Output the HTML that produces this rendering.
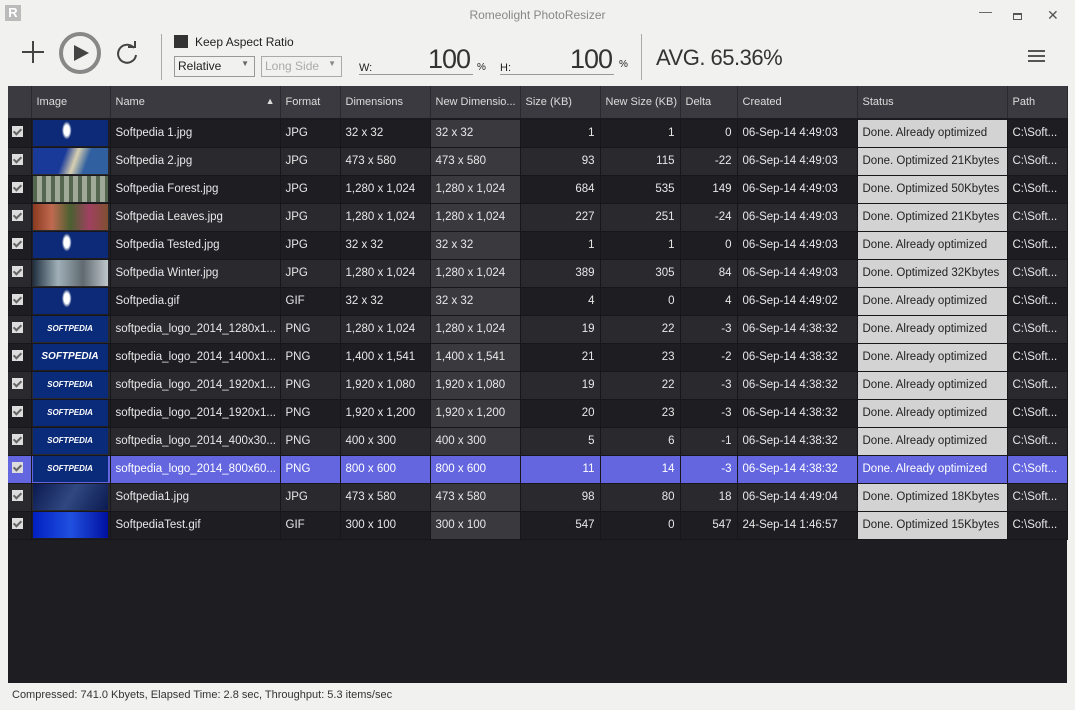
<!DOCTYPE html>
<html><head><meta charset="utf-8"><style>
*{margin:0;padding:0;box-sizing:border-box}
body{width:1075px;height:710px;background:#f1f1ef;font-family:"Liberation Sans",sans-serif;position:relative;overflow:hidden;color:#222}
.a{position:absolute}
.title{top:8px;left:0;width:1075px;text-align:center;font-size:12px;color:#888}
table{position:absolute;left:8px;top:86px;width:1059px;border-collapse:collapse;table-layout:fixed;font-size:11.5px;color:#e8e8e8}
th{height:33px;background:#3b3a40;color:#ddd;font-weight:normal;font-size:11px;text-align:left;padding-left:5px;white-space:nowrap;overflow:hidden;border-right:1px solid #2a292e;border-bottom:2px solid #1b1a1e}
td{height:28px;padding:0 5px;border-right:1px solid #17161a;border-bottom:1px solid #17161a;white-space:nowrap;overflow:hidden}
tr.o td{background:#1e1d22}tr.e td{background:#2a292e}
td.nd{background:#3a393e!important}
td.st{background:#d3d3d3!important;color:#222}
td.r{text-align:right}
tr.s td{background:#6466e0!important;color:#fff}
tr.s td.st{background:#6466e0!important;color:#fff}
.cb{width:11px;height:11px;background:#ddd;display:inline-block;margin-left:-1px;position:relative}
.cb:after{content:"";position:absolute;left:3px;top:1px;width:3px;height:6px;border:solid #666;border-width:0 2px 2px 0;transform:rotate(45deg)}
.th{width:75px;height:26px;display:block;margin-left:-4px}
.t1{background:radial-gradient(ellipse 7px 13px at 45% 40%,#fff 40%,transparent 70%),#0c2a78}
.t2{background:linear-gradient(110deg,#1a3a9a 40%,#d8d0b0 55%,#3060a0 70%)}
.t3{background:repeating-linear-gradient(90deg,#556650 0 4px,#a0a898 4px 9px)}
.t4{background:linear-gradient(90deg,#8a3a20,#c06a50,#4a6030,#a04060,#805030)}
.t6{background:linear-gradient(90deg,#203040,#a0b0b8,#606a70,#c0c8cc)}
.tl{background:#0a2a7a;color:#fff;font-weight:bold;font-size:8px;text-align:center;line-height:26px}
.t14{background:linear-gradient(120deg,#0a1a50,#304880,#0a1a50)}
.t15{background:linear-gradient(90deg,#0020c0,#2050e0,#0010a0)}
.body{position:absolute;left:8px;top:86px;width:1059px;height:597px;background:#1e1d22}
</style></head><body>
<div class="a" style="left:5px;top:5px;width:16px;height:16px;background:#bbb;color:#fff;font-weight:bold;font-size:13px;text-align:center;line-height:16px">R</div>
<div class="a title">Romeolight PhotoResizer</div>
<div class="a" style="left:979px;top:4px;font-size:13px;color:#555">—</div>
<div class="a" style="left:1013px;top:13px;width:9px;height:7px;border:1px solid #555;border-top-width:2px"></div>
<div class="a" style="left:1047px;top:7px;font-size:14px;color:#555">✕</div>
<div class="a" style="left:22px;top:51px;width:22px;height:2px;background:#444"></div>
<div class="a" style="left:32px;top:41px;width:2px;height:22px;background:#444"></div>
<svg class="a" style="left:57px;top:30px" width="46" height="46"><circle cx="23" cy="23" r="19" fill="none" stroke="#888" stroke-width="4"/><path d="M17 15 L32 23 L17 31 Z" fill="#444"/></svg>
<svg class="a" style="left:114px;top:40px" width="26" height="26"><path d="M20 8 A9 9 0 1 0 22 15" fill="none" stroke="#444" stroke-width="2"/><path d="M14 7 L21 7 L21 1" fill="none" stroke="#444" stroke-width="2"/></svg>
<div class="a" style="left:161px;top:34px;width:1px;height:46px;background:#aaa"></div>
<div class="a" style="left:174px;top:35px;width:14px;height:13px;background:#333"></div>
<div class="a" style="left:195px;top:35px;font-size:12px;color:#222">Keep Aspect Ratio</div>
<div class="a" style="left:174px;top:56px;width:81px;height:21px;border:1px solid #999;font-size:12px;padding:2px 3px;color:#222">Relative<span style="position:absolute;right:5px;top:2px;font-size:8px;color:#666">▼</span></div>
<div class="a" style="left:261px;top:56px;width:81px;height:21px;border:1px solid #aaa;font-size:12px;padding:2px 3px;color:#aaa">Long Side<span style="position:absolute;right:5px;top:2px;font-size:8px;color:#888">▼</span></div>
<div class="a" style="left:359px;top:60px;width:114px;height:15px;border-bottom:1px solid #999;font-size:11px;padding-top:2px">W:</div>
<div class="a" style="left:428px;top:44px;font-size:27px;color:#333;letter-spacing:-1px">100</div>
<div class="a" style="left:477px;top:62px;font-size:10px">%</div>
<div class="a" style="left:500px;top:60px;width:114px;height:15px;border-bottom:1px solid #999;font-size:11px;padding-top:2px">H:</div>
<div class="a" style="left:570px;top:44px;font-size:27px;color:#333;letter-spacing:-1px">100</div>
<div class="a" style="left:619px;top:59px;font-size:10px">%</div>
<div class="a" style="left:641px;top:34px;width:1px;height:46px;background:#aaa"></div>
<div class="a" style="left:656px;top:45px;font-size:22px;color:#333;letter-spacing:-.5px">AVG. 65.36%</div>
<div class="a" style="left:1028px;top:50px;width:17px;height:1.5px;background:#555;box-shadow:0 5px 0 #555,0 10px 0 #555"></div>
<div class="body"></div>
<table>
<colgroup><col style="width:23px"><col style="width:79px"><col style="width:170px"><col style="width:60px"><col style="width:90px"><col style="width:90px"><col style="width:80px"><col style="width:80px"><col style="width:57px"><col style="width:120px"><col style="width:150px"><col style="width:60px"></colgroup>
<tr><th></th><th>Image</th><th>Name<span style="float:right;margin-right:5px;font-size:9px">▲</span></th><th>Format</th><th>Dimensions</th><th>New Dimensio...</th><th>Size (KB)</th><th>New Size (KB)</th><th>Delta</th><th>Created</th><th>Status</th><th>Path</th></tr>
<tr class="o"><td><i class="cb"></i></td><td><i class="th t1"></i></td><td>Softpedia 1.jpg</td><td>JPG</td><td>32 x 32</td><td class="nd">32 x 32</td><td class="r">1</td><td class="r">1</td><td class="r">0</td><td>06-Sep-14 4:49:03</td><td class="st">Done. Already optimized</td><td>C:\Soft...</td></tr>
<tr class="e"><td><i class="cb"></i></td><td><i class="th t2"></i></td><td>Softpedia 2.jpg</td><td>JPG</td><td>473 x 580</td><td class="nd">473 x 580</td><td class="r">93</td><td class="r">115</td><td class="r">-22</td><td>06-Sep-14 4:49:03</td><td class="st">Done. Optimized 21Kbytes</td><td>C:\Soft...</td></tr>
<tr class="o"><td><i class="cb"></i></td><td><i class="th t3"></i></td><td>Softpedia Forest.jpg</td><td>JPG</td><td>1,280 x 1,024</td><td class="nd">1,280 x 1,024</td><td class="r">684</td><td class="r">535</td><td class="r">149</td><td>06-Sep-14 4:49:03</td><td class="st">Done. Optimized 50Kbytes</td><td>C:\Soft...</td></tr>
<tr class="e"><td><i class="cb"></i></td><td><i class="th t4"></i></td><td>Softpedia Leaves.jpg</td><td>JPG</td><td>1,280 x 1,024</td><td class="nd">1,280 x 1,024</td><td class="r">227</td><td class="r">251</td><td class="r">-24</td><td>06-Sep-14 4:49:03</td><td class="st">Done. Optimized 21Kbytes</td><td>C:\Soft...</td></tr>
<tr class="o"><td><i class="cb"></i></td><td><i class="th t1"></i></td><td>Softpedia Tested.jpg</td><td>JPG</td><td>32 x 32</td><td class="nd">32 x 32</td><td class="r">1</td><td class="r">1</td><td class="r">0</td><td>06-Sep-14 4:49:03</td><td class="st">Done. Already optimized</td><td>C:\Soft...</td></tr>
<tr class="e"><td><i class="cb"></i></td><td><i class="th t6"></i></td><td>Softpedia Winter.jpg</td><td>JPG</td><td>1,280 x 1,024</td><td class="nd">1,280 x 1,024</td><td class="r">389</td><td class="r">305</td><td class="r">84</td><td>06-Sep-14 4:49:03</td><td class="st">Done. Optimized 32Kbytes</td><td>C:\Soft...</td></tr>
<tr class="o"><td><i class="cb"></i></td><td><i class="th t1"></i></td><td>Softpedia.gif</td><td>GIF</td><td>32 x 32</td><td class="nd">32 x 32</td><td class="r">4</td><td class="r">0</td><td class="r">4</td><td>06-Sep-14 4:49:02</td><td class="st">Done. Already optimized</td><td>C:\Soft...</td></tr>
<tr class="e"><td><i class="cb"></i></td><td><i class="th tl">SOFTPEDIA</i></td><td>softpedia_logo_2014_1280x1...</td><td>PNG</td><td>1,280 x 1,024</td><td class="nd">1,280 x 1,024</td><td class="r">19</td><td class="r">22</td><td class="r">-3</td><td>06-Sep-14 4:38:32</td><td class="st">Done. Already optimized</td><td>C:\Soft...</td></tr>
<tr class="o"><td><i class="cb"></i></td><td><i class="th tl" style="font-size:10px">SOFTPEDIA</i></td><td>softpedia_logo_2014_1400x1...</td><td>PNG</td><td>1,400 x 1,541</td><td class="nd">1,400 x 1,541</td><td class="r">21</td><td class="r">23</td><td class="r">-2</td><td>06-Sep-14 4:38:32</td><td class="st">Done. Already optimized</td><td>C:\Soft...</td></tr>
<tr class="e"><td><i class="cb"></i></td><td><i class="th tl">SOFTPEDIA</i></td><td>softpedia_logo_2014_1920x1...</td><td>PNG</td><td>1,920 x 1,080</td><td class="nd">1,920 x 1,080</td><td class="r">19</td><td class="r">22</td><td class="r">-3</td><td>06-Sep-14 4:38:32</td><td class="st">Done. Already optimized</td><td>C:\Soft...</td></tr>
<tr class="o"><td><i class="cb"></i></td><td><i class="th tl">SOFTPEDIA</i></td><td>softpedia_logo_2014_1920x1...</td><td>PNG</td><td>1,920 x 1,200</td><td class="nd">1,920 x 1,200</td><td class="r">20</td><td class="r">23</td><td class="r">-3</td><td>06-Sep-14 4:38:32</td><td class="st">Done. Already optimized</td><td>C:\Soft...</td></tr>
<tr class="e"><td><i class="cb"></i></td><td><i class="th tl">SOFTPEDIA</i></td><td>softpedia_logo_2014_400x30...</td><td>PNG</td><td>400 x 300</td><td class="nd">400 x 300</td><td class="r">5</td><td class="r">6</td><td class="r">-1</td><td>06-Sep-14 4:38:32</td><td class="st">Done. Already optimized</td><td>C:\Soft...</td></tr>
<tr class="o s"><td><i class="cb"></i></td><td><i class="th tl">SOFTPEDIA</i></td><td>softpedia_logo_2014_800x60...</td><td>PNG</td><td>800 x 600</td><td class="nd">800 x 600</td><td class="r">11</td><td class="r">14</td><td class="r">-3</td><td>06-Sep-14 4:38:32</td><td class="st">Done. Already optimized</td><td>C:\Soft...</td></tr>
<tr class="e"><td><i class="cb"></i></td><td><i class="th t14"></i></td><td>Softpedia1.jpg</td><td>JPG</td><td>473 x 580</td><td class="nd">473 x 580</td><td class="r">98</td><td class="r">80</td><td class="r">18</td><td>06-Sep-14 4:49:04</td><td class="st">Done. Optimized 18Kbytes</td><td>C:\Soft...</td></tr>
<tr class="o"><td><i class="cb"></i></td><td><i class="th t15"></i></td><td>SoftpediaTest.gif</td><td>GIF</td><td>300 x 100</td><td class="nd">300 x 100</td><td class="r">547</td><td class="r">0</td><td class="r">547</td><td>24-Sep-14 1:46:57</td><td class="st">Done. Optimized 15Kbytes</td><td>C:\Soft...</td></tr>
</table>
<div class="a" style="left:12px;top:689px;font-size:11px;color:#333">Compressed: 741.0 Kbyets, Elapsed Time: 2.8 sec, Throughput: 5.3 items/sec</div>
</body></html>
